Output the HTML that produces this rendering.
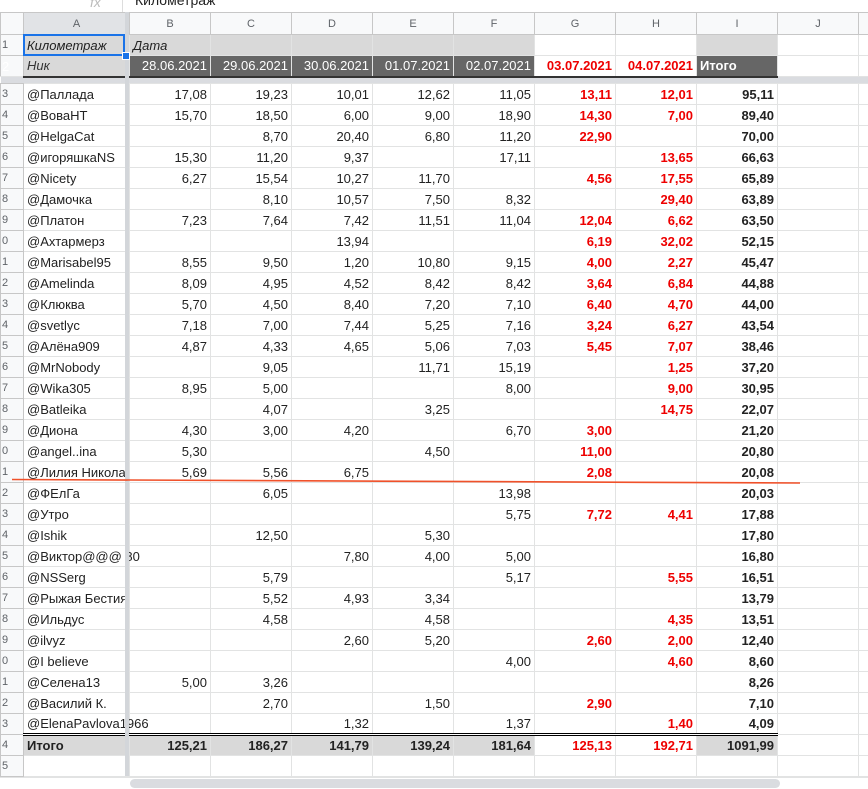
<!DOCTYPE html>
<html><head><meta charset="utf-8"><style>
body{margin:0;width:868px;height:788px;overflow:hidden;background:#fff;font-family:"Liberation Sans",Arial,sans-serif;position:relative}
table{position:absolute;left:0;top:12px;border-collapse:collapse;table-layout:fixed;width:888px;font-size:13px;color:#222}
td{border:1px solid #e2e3e3;padding:0 3px;height:21px;white-space:nowrap;overflow:hidden;text-align:right;box-sizing:border-box}
td:nth-child(1){background:#f8f9fa;color:#5f6368;font-size:11px;text-align:left;padding:0 0 0 1px;border-color:#c7c7c7}
td:nth-child(2){text-align:left;overflow:visible}
tr.d td:nth-child(8),tr.d td:nth-child(9){color:#e00;font-weight:bold}
tr.d td:nth-child(10){font-weight:bold}
tr.h td{background:#f8f9fa;color:#5f6368;font-size:11px;text-align:center;height:22px;border-color:#c7c7c7}
tr.h td:nth-child(2){background:#e1e3e6}
tr.r1 td{background:#d9d9d9;font-style:italic;text-align:left}
tr.r1 td:nth-child(8),tr.r1 td:nth-child(9),tr.r1 td:nth-child(11),tr.r1 td:nth-child(12){background:#fff}
tr.r1 td:nth-child(1),tr.r2 td:nth-child(1){background:#f8f9fa;font-style:normal}
tr.r2 td{background:#666;color:#fff;font-size:13px}
tr.r2 td:nth-child(2){background:#d9d9d9;color:#333;font-style:italic;text-align:left}
tr.r2 td:nth-child(8),tr.r2 td:nth-child(9){background:#fff;color:#e00;font-weight:bold}
tr.r2 td:nth-child(10){font-weight:bold;text-align:left}
tr.r2 td:nth-child(11),tr.r2 td:nth-child(12){background:#fff}
tr.r2 td{border-bottom:2px solid #333}
tr.r2 td:nth-child(1),tr.r2 td:nth-child(11),tr.r2 td:nth-child(12){border-bottom:1px solid #e2e3e3}
tr.fz td{height:7px;background:#dadce0;border:none;padding:0}
tr.t td{background:#d9d9d9;font-weight:bold;border-top:3px double #000}
tr.t td:nth-child(8),tr.t td:nth-child(9){background:#fff;color:#e00}
tr.t td:nth-child(1),tr.t td:nth-child(11),tr.t td:nth-child(12){background:#f8f9fa;border-top:1px solid #e2e3e3;font-weight:normal}
tr.t td:nth-child(11),tr.t td:nth-child(12){background:#fff}
.sel{position:absolute;left:23px;top:34px;width:102px;height:22px;border:2px solid #1a73e8;box-sizing:border-box}
.hd{position:absolute;left:122px;top:52px;width:6px;height:6px;background:#1a73e8;border:1px solid #fff}
</style></head><body>
<div style="position:absolute;left:90px;top:-6px;color:#bbb;font-style:italic;font-size:14px">fx</div>
<div style="position:absolute;left:122px;top:0;width:1px;height:12px;background:#ddd"></div>
<div style="position:absolute;left:135px;top:-8px;font-size:14px;color:#222">Километраж</div>
<table>
<colgroup><col style="width:23px"><col style="width:106px"><col style="width:81px"><col style="width:81px"><col style="width:81px"><col style="width:81px"><col style="width:81px"><col style="width:81px"><col style="width:81px"><col style="width:81px"><col style="width:81px"><col style="width:30px"></colgroup>
<tr class="h"><td></td><td>A</td><td>B</td><td>C</td><td>D</td><td>E</td><td>F</td><td>G</td><td>H</td><td>I</td><td>J</td><td></td></tr>
<tr class="r1"><td>1</td><td>Километраж</td><td>Дата</td><td></td><td></td><td></td><td></td><td></td><td></td><td></td><td></td><td></td></tr>
<tr class="r2"><td>2</td><td>Ник</td><td>28.06.2021</td><td>29.06.2021</td><td>30.06.2021</td><td>01.07.2021</td><td>02.07.2021</td><td>03.07.2021</td><td>04.07.2021</td><td>Итого</td><td></td><td></td></tr>
<tr class="fz"><td></td><td></td><td></td><td></td><td></td><td></td><td></td><td></td><td></td><td></td><td></td><td></td></tr>
<tr class="d"><td>3</td><td>@Паллада</td><td>17,08</td><td>19,23</td><td>10,01</td><td>12,62</td><td>11,05</td><td>13,11</td><td>12,01</td><td>95,11</td><td></td><td></td></tr>
<tr class="d"><td>4</td><td>@ВоваНТ</td><td>15,70</td><td>18,50</td><td>6,00</td><td>9,00</td><td>18,90</td><td>14,30</td><td>7,00</td><td>89,40</td><td></td><td></td></tr>
<tr class="d"><td>5</td><td>@HelgaCat</td><td></td><td>8,70</td><td>20,40</td><td>6,80</td><td>11,20</td><td>22,90</td><td></td><td>70,00</td><td></td><td></td></tr>
<tr class="d"><td>6</td><td>@игоряшкаNS</td><td>15,30</td><td>11,20</td><td>9,37</td><td></td><td>17,11</td><td></td><td>13,65</td><td>66,63</td><td></td><td></td></tr>
<tr class="d"><td>7</td><td>@Nicety</td><td>6,27</td><td>15,54</td><td>10,27</td><td>11,70</td><td></td><td>4,56</td><td>17,55</td><td>65,89</td><td></td><td></td></tr>
<tr class="d"><td>8</td><td>@Дамочка</td><td></td><td>8,10</td><td>10,57</td><td>7,50</td><td>8,32</td><td></td><td>29,40</td><td>63,89</td><td></td><td></td></tr>
<tr class="d"><td>9</td><td>@Платон</td><td>7,23</td><td>7,64</td><td>7,42</td><td>11,51</td><td>11,04</td><td>12,04</td><td>6,62</td><td>63,50</td><td></td><td></td></tr>
<tr class="d"><td>0</td><td>@Ахтармерз</td><td></td><td></td><td>13,94</td><td></td><td></td><td>6,19</td><td>32,02</td><td>52,15</td><td></td><td></td></tr>
<tr class="d"><td>1</td><td>@Marisabel95</td><td>8,55</td><td>9,50</td><td>1,20</td><td>10,80</td><td>9,15</td><td>4,00</td><td>2,27</td><td>45,47</td><td></td><td></td></tr>
<tr class="d"><td>2</td><td>@Amelinda</td><td>8,09</td><td>4,95</td><td>4,52</td><td>8,42</td><td>8,42</td><td>3,64</td><td>6,84</td><td>44,88</td><td></td><td></td></tr>
<tr class="d"><td>3</td><td>@Клюква</td><td>5,70</td><td>4,50</td><td>8,40</td><td>7,20</td><td>7,10</td><td>6,40</td><td>4,70</td><td>44,00</td><td></td><td></td></tr>
<tr class="d"><td>4</td><td>@svetlyc</td><td>7,18</td><td>7,00</td><td>7,44</td><td>5,25</td><td>7,16</td><td>3,24</td><td>6,27</td><td>43,54</td><td></td><td></td></tr>
<tr class="d"><td>5</td><td>@Алёна909</td><td>4,87</td><td>4,33</td><td>4,65</td><td>5,06</td><td>7,03</td><td>5,45</td><td>7,07</td><td>38,46</td><td></td><td></td></tr>
<tr class="d"><td>6</td><td>@MrNobody</td><td></td><td>9,05</td><td></td><td>11,71</td><td>15,19</td><td></td><td>1,25</td><td>37,20</td><td></td><td></td></tr>
<tr class="d"><td>7</td><td>@Wika305</td><td>8,95</td><td>5,00</td><td></td><td></td><td>8,00</td><td></td><td>9,00</td><td>30,95</td><td></td><td></td></tr>
<tr class="d"><td>8</td><td>@Batleika</td><td></td><td>4,07</td><td></td><td>3,25</td><td></td><td></td><td>14,75</td><td>22,07</td><td></td><td></td></tr>
<tr class="d"><td>9</td><td>@Диона</td><td>4,30</td><td>3,00</td><td>4,20</td><td></td><td>6,70</td><td>3,00</td><td></td><td>21,20</td><td></td><td></td></tr>
<tr class="d"><td>0</td><td>@angel..ina</td><td>5,30</td><td></td><td></td><td>4,50</td><td></td><td>11,00</td><td></td><td>20,80</td><td></td><td></td></tr>
<tr class="d"><td>1</td><td style="overflow:hidden">@Лилия Николаева</td><td>5,69</td><td>5,56</td><td>6,75</td><td></td><td></td><td>2,08</td><td></td><td>20,08</td><td></td><td></td></tr>
<tr class="d"><td>2</td><td>@ФЕлГа</td><td></td><td>6,05</td><td></td><td></td><td>13,98</td><td></td><td></td><td>20,03</td><td></td><td></td></tr>
<tr class="d"><td>3</td><td>@Утро</td><td></td><td></td><td></td><td></td><td>5,75</td><td>7,72</td><td>4,41</td><td>17,88</td><td></td><td></td></tr>
<tr class="d"><td>4</td><td>@Ishik</td><td></td><td>12,50</td><td></td><td>5,30</td><td></td><td></td><td></td><td>17,80</td><td></td><td></td></tr>
<tr class="d"><td>5</td><td>@Виктор@@@ 80</td><td></td><td></td><td>7,80</td><td>4,00</td><td>5,00</td><td></td><td></td><td>16,80</td><td></td><td></td></tr>
<tr class="d"><td>6</td><td>@NSSerg</td><td></td><td>5,79</td><td></td><td></td><td>5,17</td><td></td><td>5,55</td><td>16,51</td><td></td><td></td></tr>
<tr class="d"><td>7</td><td>@Рыжая Бестия</td><td></td><td>5,52</td><td>4,93</td><td>3,34</td><td></td><td></td><td></td><td>13,79</td><td></td><td></td></tr>
<tr class="d"><td>8</td><td>@Ильдус</td><td></td><td>4,58</td><td></td><td>4,58</td><td></td><td></td><td>4,35</td><td>13,51</td><td></td><td></td></tr>
<tr class="d"><td>9</td><td>@ilvyz</td><td></td><td></td><td>2,60</td><td>5,20</td><td></td><td>2,60</td><td>2,00</td><td>12,40</td><td></td><td></td></tr>
<tr class="d"><td>0</td><td>@I believe</td><td></td><td></td><td></td><td></td><td>4,00</td><td></td><td>4,60</td><td>8,60</td><td></td><td></td></tr>
<tr class="d"><td>1</td><td>@Селена13</td><td>5,00</td><td>3,26</td><td></td><td></td><td></td><td></td><td></td><td>8,26</td><td></td><td></td></tr>
<tr class="d"><td>2</td><td>@Василий К.</td><td></td><td>2,70</td><td></td><td>1,50</td><td></td><td>2,90</td><td></td><td>7,10</td><td></td><td></td></tr>
<tr class="d"><td>3</td><td>@ElenaPavlova1966</td><td></td><td></td><td>1,32</td><td></td><td>1,37</td><td></td><td>1,40</td><td>4,09</td><td></td><td></td></tr>
<tr class="t"><td>4</td><td>Итого</td><td>125,21</td><td>186,27</td><td>141,79</td><td>139,24</td><td>181,64</td><td>125,13</td><td>192,71</td><td>1091,99</td><td></td><td></td></tr>
<tr><td>5</td><td></td><td></td><td></td><td></td><td></td><td></td><td></td><td></td><td></td><td></td><td></td></tr>
</table>
<div style="position:absolute;left:125px;top:12px;width:4px;height:764px;background:#d3d6da"></div>
<div class="sel"></div><div class="hd"></div>
<svg style="position:absolute;left:0;top:0" width="868" height="788"><line x1="12" y1="479.5" x2="800" y2="483" stroke="#f0512a" stroke-width="1.6"/></svg>
<div style="position:absolute;left:0;top:777px;width:868px;height:11px;background:#fff;border-top:1px solid #e2e3e3"></div>
<div style="position:absolute;left:130px;top:779px;width:650px;height:9px;background:#dadce0;border-radius:5px"></div>
</body></html>
